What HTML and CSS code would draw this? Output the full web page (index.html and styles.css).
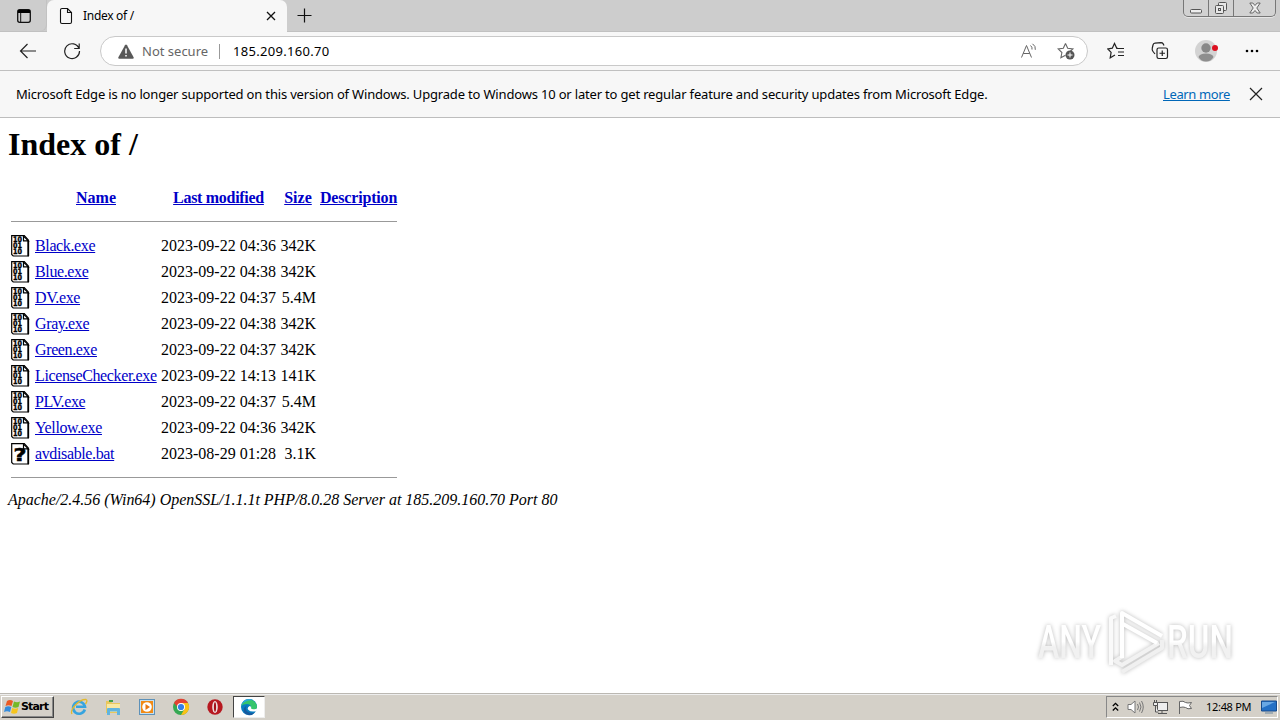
FILE: index.html
```html
<!DOCTYPE html>
<html lang="en">
<head>
<meta charset="utf-8">
<title>Index of /</title>
<link rel="stylesheet" href="styles.css">
</head>
<body>
<svg class="defs" width="0" height="0">
  <symbol id="sheet" viewBox="0 0 20 22">
    <path d="M.7.7h12.6L17.300 5v16H2.200L.7 19.500z" fill="#fff" stroke="#000" stroke-width="1.200"/>
    <path d="M17.300 5.500v15.700" stroke="#000" stroke-width="1.700"/>
    <path d="M12.500 1v4.800h4.800z" fill="#fff" stroke="#000" stroke-width="1.200"/>
  </symbol>
</svg>
<div class="screen">
  <header class="tabs">
    <div class="workspace"><svg width="16" height="16" viewBox="0 0 16 16"><rect x="1.7" y="1.7" width="12.6" height="12.6" rx="2" fill="none" stroke="#111" stroke-width="1.3"/><path d="M2 2h12v3H2z"/><path d="M4.7 5v9" stroke="#111"/></svg></div>
    <div class="tab">
      <svg width="14" height="18" viewBox="0 0 14 18" fill="none" stroke="#111" stroke-width="1.1"><path d="M1.5 3q0-1.5 1.5-1.5h5.5l4 4V15q0 1.5-1.5 1.5H3Q1.5 16.500 1.500 15zM8.500 1.500v4h4"/></svg>
      <span class="tab-title">Index of /</span>
      <svg class="tab-close" width="10" height="10" viewBox="0 0 10 10" stroke="#111" stroke-width="1.3"><path d="M1 1l8 8M9 1L1 9"/></svg>
    </div>
    <svg class="new-tab" width="15" height="15" viewBox="0 0 15 15" stroke="#111" stroke-width="1.2"><path d="M.5 7.500h14M7.500.5v14"/></svg>
    <div class="window-buttons">
      <span class="wb"><svg width="12" height="14" viewBox="0 0 12 14" fill="#eee" stroke="#555"><rect x=".5" y="8.500" width="11" height="3.500" rx="1"/></svg></span>
      <span class="wb"><svg width="14" height="14" viewBox="0 0 14 14" fill="#e7e7e7" stroke="#555"><rect x="4.500" y="1.500" width="8" height="8" rx="1"/><rect x="1.500" y="4.500" width="8" height="8" rx="1"/><rect x="4.500" y="7.500" width="2" height="2"/></svg></span>
      <span class="wb wide"><svg width="12" height="12" viewBox="0 0 12 12" fill="#eee" stroke="#666"><path d="M.8 1h3L6 3.500 8.200 1h3L7.800 6l3.400 5h-3L6 8.500 3.800 11h-3l3.400-5z"/></svg></span>
    </div>
  </header>
  <div class="toolbar">
    <svg class="back" width="18" height="16" viewBox="0 0 18 16" fill="none" stroke="#222" stroke-width="1.2"><path d="M17 8H2M8.500 1L1.500 8l7 7"/></svg>
    <svg class="reload" width="18" height="18" viewBox="0 0 18 18" fill="none" stroke="#222" stroke-width="1.2"><path d="M16 6.500A7.400 7.400 0 1 0 16.500 9M16.200 1.500v5h-5"/></svg>
    <div class="address-bar">
      <svg width="16" height="15" viewBox="0 0 16 15"><path d="M7 1.200q1-1.600 2 0l6.600 12q.6 1.500-1 1.500H1.400q-1.600 0-1-1.500z" fill="#585858"/><path d="M8 4.500v5M8 11v1.600" stroke="#fff" stroke-width="1.500"/></svg>
      <span class="insecure">Not secure</span><i class="divider"></i><span class="url">185.209.160.70</span>
      <svg class="read" width="18" height="16" viewBox="0 0 18 16" fill="none" stroke="#666"><path d="M1.500 14.500L6.500 2.500l5 12M3.200 10.500h6.600M10.500 2.500q2 1.500 1.500 4M12.500.8q3.500 2.300 2.800 6"/></svg>
      <svg class="add-star" width="19" height="19" viewBox="0 0 19 19"><path d="M8.500 1.500l2.200 4.700 5.200.7-3.800 3.600M8.500 1.500L6.300 6.200l-5.200.7 3.800 3.600-1 5.200 4.600-2.500" fill="none" stroke="#666" stroke-width="1.100"/><circle cx="13" cy="13" r="4.500" fill="#555"/><path d="M10.500 13h5M13 10.500v5" stroke="#fff"/></svg>
    </div>
    <svg class="favorites" width="18" height="18" viewBox="0 0 18 18" fill="none" stroke="#222" stroke-width="1.200"><path d="M11 6.300H9.800L7.500 1.500 5.300 6.200l-4.500.7 3.300 3.500-.9 5.400 4.800-2.700M10.500 6.500H17M11 10h6M11 13.500h6"/></svg>
    <svg class="collections" width="18" height="18" viewBox="0 0 18 18" fill="none" stroke="#222" stroke-width="1.200"><rect x="6" y="6" width="10.500" height="10.500" rx="1.700"/><path d="M11.250 8.500v5.500M8.500 11.250H14M4 12L2 9.500Q.8 8 1.300 6l.7-3q.4-1.700 2-1.800l6-.5q1.400 0 2.200 1.200L13 3.500"/></svg>
    <svg class="profile" width="24" height="24" viewBox="0 0 24 24"><circle cx="11" cy="12" r="11" fill="#d3d3d3"/><circle cx="11" cy="9" r="4.700" fill="#888"/><path d="M3.500 18q1-3.500 7.500-3.500t7.500 3.500q-2.500 4.500-7.500 4.500T3.500 18z" fill="#8e8e8e"/><circle cx="20" cy="9" r="3" fill="#dc1020"/></svg>
    <svg class="more" width="14" height="4" viewBox="0 0 14 4"><circle cx="2" cy="2" r="1.300"/><circle cx="7" cy="2" r="1.300"/><circle cx="12" cy="2" r="1.300"/></svg>
  </div>
  <div class="notice">
    <span class="notice-text">Microsoft Edge is no longer supported on this version of Windows. Upgrade to Windows 10 or later to get regular feature and security updates from Microsoft Edge.</span>
    <a class="learn" href="#">Learn more</a>
    <svg class="notice-close" width="14" height="14" viewBox="0 0 14 14" stroke="#222" stroke-width="1.200"><path d="M1 1l12 12M13 1L1 13"/></svg>
  </div>
  <main class="page">
    <h1>Index of /</h1>
    <table>
      <colgroup><col class="c-icon"><col class="c-name"><col class="c-date"><col class="c-size"><col class="c-desc"></colgroup>
      <tr class="head"><th></th><th><a href="#">Name</a></th><th><a class="tight" href="#">Last modified</a></th><th><a href="#">Size</a></th><th><a class="snug" href="#">Description</a></th></tr>
      <tr><td colspan="5"><hr></td></tr>
      <tr><td><svg class="file"><use href="#sheet"/><text class="bits" x="2" y="7.300" textLength="9" lengthAdjust="spacingAndGlyphs">10</text><text class="bits" x="2" y="13.300" textLength="9" lengthAdjust="spacingAndGlyphs">01</text><text class="bits" x="2" y="19.300" textLength="9" lengthAdjust="spacingAndGlyphs">10</text></svg></td><td><a href="#">Black.exe</a></td><td>2023-09-22 04:36</td><td class="size">342K</td><td></td></tr>
      <tr><td><svg class="file"><use href="#sheet"/><text class="bits" x="2" y="7.300" textLength="9" lengthAdjust="spacingAndGlyphs">10</text><text class="bits" x="2" y="13.300" textLength="9" lengthAdjust="spacingAndGlyphs">01</text><text class="bits" x="2" y="19.300" textLength="9" lengthAdjust="spacingAndGlyphs">10</text></svg></td><td><a href="#">Blue.exe</a></td><td>2023-09-22 04:38</td><td class="size">342K</td><td></td></tr>
      <tr><td><svg class="file"><use href="#sheet"/><text class="bits" x="2" y="7.300" textLength="9" lengthAdjust="spacingAndGlyphs">10</text><text class="bits" x="2" y="13.300" textLength="9" lengthAdjust="spacingAndGlyphs">01</text><text class="bits" x="2" y="19.300" textLength="9" lengthAdjust="spacingAndGlyphs">10</text></svg></td><td><a href="#">DV.exe</a></td><td>2023-09-22 04:37</td><td class="size">5.4M</td><td></td></tr>
      <tr><td><svg class="file"><use href="#sheet"/><text class="bits" x="2" y="7.300" textLength="9" lengthAdjust="spacingAndGlyphs">10</text><text class="bits" x="2" y="13.300" textLength="9" lengthAdjust="spacingAndGlyphs">01</text><text class="bits" x="2" y="19.300" textLength="9" lengthAdjust="spacingAndGlyphs">10</text></svg></td><td><a href="#">Gray.exe</a></td><td>2023-09-22 04:38</td><td class="size">342K</td><td></td></tr>
      <tr><td><svg class="file"><use href="#sheet"/><text class="bits" x="2" y="7.300" textLength="9" lengthAdjust="spacingAndGlyphs">10</text><text class="bits" x="2" y="13.300" textLength="9" lengthAdjust="spacingAndGlyphs">01</text><text class="bits" x="2" y="19.300" textLength="9" lengthAdjust="spacingAndGlyphs">10</text></svg></td><td><a href="#">Green.exe</a></td><td>2023-09-22 04:37</td><td class="size">342K</td><td></td></tr>
      <tr><td><svg class="file"><use href="#sheet"/><text class="bits" x="2" y="7.300" textLength="9" lengthAdjust="spacingAndGlyphs">10</text><text class="bits" x="2" y="13.300" textLength="9" lengthAdjust="spacingAndGlyphs">01</text><text class="bits" x="2" y="19.300" textLength="9" lengthAdjust="spacingAndGlyphs">10</text></svg></td><td><a href="#">LicenseChecker.exe</a></td><td>2023-09-22 14:13</td><td class="size">141K</td><td></td></tr>
      <tr><td><svg class="file"><use href="#sheet"/><text class="bits" x="2" y="7.300" textLength="9" lengthAdjust="spacingAndGlyphs">10</text><text class="bits" x="2" y="13.300" textLength="9" lengthAdjust="spacingAndGlyphs">01</text><text class="bits" x="2" y="19.300" textLength="9" lengthAdjust="spacingAndGlyphs">10</text></svg></td><td><a href="#">PLV.exe</a></td><td>2023-09-22 04:37</td><td class="size">5.4M</td><td></td></tr>
      <tr><td><svg class="file"><use href="#sheet"/><text class="bits" x="2" y="7.300" textLength="9" lengthAdjust="spacingAndGlyphs">10</text><text class="bits" x="2" y="13.300" textLength="9" lengthAdjust="spacingAndGlyphs">01</text><text class="bits" x="2" y="19.300" textLength="9" lengthAdjust="spacingAndGlyphs">10</text></svg></td><td><a href="#">Yellow.exe</a></td><td>2023-09-22 04:36</td><td class="size">342K</td><td></td></tr>
      <tr><td><svg class="file"><use href="#sheet"/><text class="query" x="2.500" y="18" textLength="13" lengthAdjust="spacingAndGlyphs">?</text></svg></td><td><a href="#">avdisable.bat</a></td><td>2023-08-29 01:28</td><td class="size">3.1K</td><td></td></tr>
      <tr><td colspan="5"><hr></td></tr>
    </table>
    <address>Apache/2.4.56 (Win64) OpenSSL/1.1.1t PHP/8.0.28 Server at 185.209.160.70 Port 80</address>
    <svg class="watermark" width="210" height="74" viewBox="0 0 210 74">
      <defs><linearGradient id="fade" x1="0" y1="0" x2="0" y2="1"><stop offset=".5" stop-color="#fff"/><stop offset=".6" stop-color="#f1f1f1"/></linearGradient></defs>
      <g fill="url(#fade)" font-family="Roboto" font-weight="500" font-size="47">
        <text x="8" y="54" textLength="63" lengthAdjust="spacingAndGlyphs">ANY</text>
        <text x="137" y="54" textLength="66" lengthAdjust="spacingAndGlyphs">RUN</text>
      </g>
      <g fill="none" stroke-width="4" stroke-linejoin="round"><path d="M92 68l40-24v-8" stroke="#f0f0f0"/><path d="M93 52l-8 5 7 4 37-22" stroke="#f2f2f2"/><path d="M81 61V14l5-2" stroke="#fafafa"/><path d="M92 54V9l40 23" stroke="#fff"/><path d="M93 20l34 19" stroke="#fff"/></g>
    </svg>
  </main>
  <footer class="taskbar">
    <div class="start"><svg width="17" height="16" viewBox="0 0 17 16"><path d="M3 2q3-2 6 0L7.500 7q-3-1.500-6 0z" fill="#eb5a24"/><path d="M10 2.500q3 1.500 6 0L14.500 8q-3 1.300-6 0z" fill="#75b928"/><path d="M1.300 8q3-1.500 6 0L6 13q-3-1.500-6 0z" fill="#348cdc"/><path d="M8.200 9q3 1.500 6 0L13 14q-3 1.500-6 0z" fill="#f6c51d"/></svg><span>Start</span></div>
    <div class="apps">
      <svg viewBox="0 0 18 18"><path d="M14.800 11.500A6 6 0 1 1 15 8.800H6" fill="none" stroke="#36a4df" stroke-width="2.600"/><path d="M2 16C-.5 12 9 1 16 1.500q2 1-.5 4.500" fill="none" stroke="#e3b92d" stroke-width="1.300"/></svg>
      <svg viewBox="0 0 18 18"><path d="M2 3h5l1 2h8v10H2z" fill="#e9c75c"/><path d="M3 6h13v8H3z" fill="#f8e8a2"/><path d="M3 17v-6q0-1 1-1h11q1 0 1 1v6h-3v-3.500H6V17z" fill="#61b4df"/><path d="M5 3h4" stroke="#43a047" stroke-width="2"/></svg>
      <svg viewBox="0 0 18 18"><rect x="1.500" y="1.500" width="15" height="15" fill="#c6e0f1" stroke="#5d91b9"/><rect x="3" y="3" width="12" height="12" fill="#f18a16"/><circle cx="9" cy="9" r="4.800" fill="#fff"/><path d="M7.500 6l4.500 3-4.500 3z" fill="#e77712"/></svg>
      <svg viewBox="0 0 18 18"><circle cx="9" cy="9" r="8" fill="#36a853"/><path d="M2 5a8 8 0 0 1 14 0L15 9H5.500z" fill="#e34133"/><path d="M9 17a8 8 0 0 0 7-12H9l3.500 6z" fill="#fbc116"/><circle cx="9" cy="9" r="4" fill="#fff"/><circle cx="9" cy="9" r="3.100" fill="#347fe8"/></svg>
      <svg viewBox="0 0 18 18"><circle cx="9" cy="9" r="7.700" fill="#b71820"/><ellipse cx="9" cy="9" rx="2.800" ry="6" fill="#eee0e0"/><ellipse cx="9" cy="9" rx="1.100" ry="4.800" fill="#a41018"/></svg>
    </div>
    <div class="active-app"><svg width="18" height="18" viewBox="0 0 18 18"><circle cx="9" cy="9" r="8" fill="#087dc0"/><path d="M1.200 8A8 8 0 0 1 17 8.500q0 4-5 3.500-2-.5-1-2 0-4-4-4-4 0-5.800 2z" fill="#35c56b"/><path d="M1.200 8A8 8 0 0 1 13 2Q7 2 3 5z" fill="#2aa9df"/><path d="M7 7q-3 4 1 7 4 2 7.200.2Q12 18 8 17 2.500 15.500 4 10z" fill="#165a9f"/><path d="M9.500 8q-3 2-1 4 2.500 2.500 8 1l1-3q-2 2-5.500 1-2-.7-.5-2z" fill="#fff"/></svg></div>
    <div class="tray">
      <svg width="7" height="10" viewBox="0 0 7 10" fill="none" stroke="#000" stroke-width="1.300"><path d="M.8 4l2.700-2.700L6.200 4M.8 8.500l2.700-2.700 2.700 2.700"/></svg>
      <svg width="17" height="16" viewBox="0 0 17 16" fill="#fff" stroke="#777"><path d="M1 5.500h3l4-3.500v12l-4-3.500H1z"/><path d="M10.500 5q2 3 0 6M12.500 3.500q3 4.500 0 9M14.500 2q3.500 6 0 12" fill="none"/></svg>
      <svg width="17" height="16" viewBox="0 0 17 16" fill="#eee" stroke="#555"><rect x="5.500" y="3.500" width="10" height="8"/><path d="M10 12v2M6 14.500h9M1.500 3.500h4v3h-4zM2.500 1v2M4.500 1v2M3.500 7v6h3"/></svg>
      <svg width="17" height="16" viewBox="0 0 17 16" fill="#fff" stroke="#666"><path d="M2.500 15V2.500q4-1 6 1 2 1 6 0l-2 3 2 3q-4 1-6-1-2-1-6 0"/></svg>
      <span class="clock">12:48 PM</span>
      <svg width="16" height="14" viewBox="0 0 16 14"><path d="M.5 1h15v10H.5z" fill="#2470c5" stroke="#174b8c"/><path d="M1 2l13 0L1 8z" fill="#69a8e4"/><path d="M4 13h8" stroke="#6a879f"/></svg>
    </div>
  </footer>
</div>
</body>
</html>
```

FILE: styles.css
```css
* { box-sizing: border-box; }
body { margin: 0; overflow: hidden; background: #fff; color: #000; }
svg { display: block; flex: none; }
.defs { position: absolute; }
.screen { width: 1280px; height: 720px; display: flex; flex-direction: column; font-family: "Noto Sans", sans-serif; font-size: 13px; }
.tabs { height: 32px; flex: none; display: flex; background: #cdcdcd; border-bottom: 1px solid #c1c1c1; }
.workspace { width: 47px; padding: 8px 0 0 16px; border-bottom-right-radius: 6px; box-shadow: inset -1px 0 #c2c2c2; }
.tab { width: 240px; height: 32px; display: flex; align-items: center; padding: 0 11px 0 12px; background: #f7f7f7; border-radius: 7px 7px 0 0; }
.tab-title { margin: -1px 0 0 10px; font-size: 12px; letter-spacing: -.3px; white-space: nowrap; }
.tab-close { margin-left: auto; }
.new-tab { margin: 8px 0 0 10px; }
.window-buttons { display: flex; width: 93px; height: 17px; margin: 0 4px 0 auto; border: 1px solid #777; border-top: 0; border-radius: 0 0 5px 5px; background: #d2d2d2; box-shadow: 0 1px #e6e6e6; }
.wb { width: 25px; display: flex; justify-content: center; align-items: center; border-right: 1px solid #777; }
.wb.wide { flex: 1; border: 0; }
.toolbar { height: 39px; flex: none; display: flex; align-items: center; background: #f7f7f7; border-bottom: 1px solid #c0c0c0; }
.back { margin-left: 19px; }
.reload { margin-left: 26px; }
.address-bar { width: 988px; height: 30px; margin-left: 19px; display: flex; align-items: center; padding-left: 17px; border: 1px solid #c9c9c9; border-radius: 15px; background: #fff; }
.insecure { width: 67px; margin-left: 8px; color: #666; white-space: nowrap; }
.divider { width: 1px; height: 15px; margin: 0 13px 0 10px; background: #999; }
.url { letter-spacing: .3px; white-space: nowrap; }
.read { margin-left: auto; }
.add-star { margin: 0 11px 0 19px; }
.favorites { margin-left: 19px; }
.collections { margin-left: 26px; }
.profile { margin-left: 26px; }
.more { margin-left: 26px; }
.notice { height: 47px; flex: none; display: flex; align-items: center; background: #f7f7f7; border-bottom: 1px solid #bdbdbd; padding: 0 0 1px 16px; }
.notice-text { width: 1147px; letter-spacing: -.178px; white-space: nowrap; }
.learn { width: 68px; color: #0067b8; letter-spacing: -.38px; white-space: nowrap; }
.notice-close { margin-left: 18px; }
.page { position: relative; height: 575px; flex: none; padding: 8px; font: 16px/18px "Liberation Serif", serif; }
h1 { margin: 0 0 21px; font-size: 32px; line-height: 37px; }
table { width: 392px; table-layout: fixed; border-spacing: 2px; border-collapse: separate; }
td, th { height: 24px; padding: 1px; white-space: nowrap; }
td[colspan] { height: 20px; }
.c-icon { width: 22px; }
.c-name { width: 124px; }
.c-date { width: 117px; }
.c-size { width: 38px; }
.c-desc { width: 79px; }
.page a { color: #0000c8; }
td a { letter-spacing: -.37px; }
.tight { letter-spacing: -.3px; }
.snug { letter-spacing: -.18px; }
.file { width: 20px; height: 22px; }
.bits { font: bold 7.5px "DejaVu Sans", sans-serif; stroke: #000; stroke-width: .4px; }
.query { font: bold 18px "DejaVu Sans", sans-serif; stroke: #000; stroke-width: .6px; }
.size { text-align: right; }
hr { height: 1px; margin: 8px 0 9px; border: 0; background: #999; }
address { padding-top: 1px; letter-spacing: -.015px; white-space: nowrap; }
.watermark { position: absolute; left: 1030px; top: 486px; filter: drop-shadow(0 0 2px #bbb); }
.taskbar { height: 27px; flex: none; display: flex; align-items: center; padding: 1px 2px 2px 1px; background: #d4d0c8; border-top: 1px solid #bbb8b2; box-shadow: inset 0 1px #eee; }
.start { width: 53px; height: 22px; display: flex; align-items: center; padding-left: 2px; border: 1px solid; border-color: #fff #444 #444 #fff; box-shadow: inset -1px -1px #888; font: bold 11px "DejaVu Sans", sans-serif; }
.start span { letter-spacing: -.85px; }
.apps { display: flex; gap: 16px; margin-left: 16px; }
.apps svg { width: 18px; height: 18px; }
.active-app { width: 32px; height: 22px; margin-left: 9px; display: flex; align-items: center; justify-content: center; background: #fff; border: 1px solid; border-color: #444 #eee #eee #444; }
.tray { width: 172px; height: 22px; margin-left: auto; display: flex; align-items: center; padding-left: 5px; border: 1px solid; border-color: #888 #fff #fff #888; gap: 8px; }
.clock { width: 47px; margin-left: 4px; font-size: 11px; letter-spacing: -.3px; white-space: nowrap; }
```
